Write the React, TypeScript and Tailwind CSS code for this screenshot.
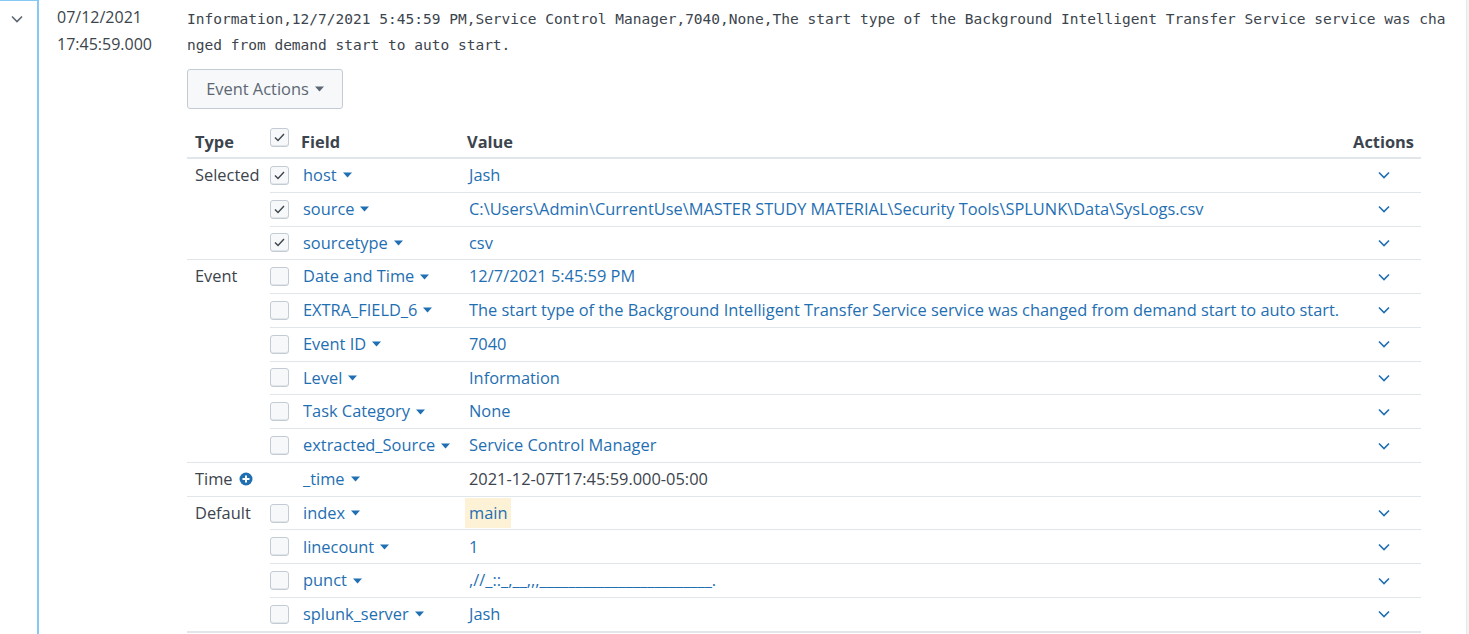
import React from "react";

const TXT = "text-[#3c444d]";
const LINK = "text-[#1f6fb2]";

function Caret() {
  return (
    <svg width="9" height="6" viewBox="0 0 9 6" className="ml-[6px] inline-block">
      <polygon points="0,0.5 9,0.5 4.5,5.5" fill="currentColor" />
    </svg>
  );
}

function Chevron({ className = "" }: { className?: string }) {
  return (
    <svg width="12" height="8" viewBox="0 0 12 8" className={className}>
      <polyline points="1,1.5 6,6.5 11,1.5" fill="none" stroke="currentColor" strokeWidth="1.6" />
    </svg>
  );
}

function Checkbox({ checked }: { checked?: boolean }) {
  return (
    <div className="w-[19px] h-[19px] rounded-[3px] border border-[#c3cbd4] bg-[#f7f8fa] flex items-center justify-center shadow-[inset_0_-1px_0_#e1e6eb]">
      {checked && (
        <svg width="11" height="9" viewBox="0 0 11 9">
          <polyline points="1,4.5 4,7.5 10,1" fill="none" stroke="#3c444d" strokeWidth="1.4" />
        </svg>
      )}
    </div>
  );
}

function PlusCircle() {
  return (
    <svg width="14" height="14" viewBox="0 0 14 14" className="ml-[6px]">
      <circle cx="7" cy="7" r="6.5" fill="#1f6fb2" />
      <rect x="3.5" y="6" width="7" height="2" fill="#fff" />
      <rect x="6" y="3.5" width="2" height="7" fill="#fff" />
    </svg>
  );
}

type Row = {
  field: string;
  value: string;
  checked?: boolean;
  noBox?: boolean;
  plainValue?: boolean;
  highlight?: boolean;
  noAction?: boolean;
};

type Group = { type: string; plus?: boolean; rows: Row[] };

const groups: Group[] = [
  {
    type: "Selected",
    rows: [
      { field: "host", value: "Jash", checked: true },
      {
        field: "source",
        value: "C:\\Users\\Admin\\CurrentUse\\MASTER STUDY MATERIAL\\Security Tools\\SPLUNK\\Data\\SysLogs.csv",
        checked: true,
      },
      { field: "sourcetype", value: "csv", checked: true },
    ],
  },
  {
    type: "Event",
    rows: [
      { field: "Date and Time", value: "12/7/2021 5:45:59 PM" },
      {
        field: "EXTRA_FIELD_6",
        value:
          "The start type of the Background Intelligent Transfer Service service was changed from demand start to auto start.",
      },
      { field: "Event ID", value: "7040" },
      { field: "Level", value: "Information" },
      { field: "Task Category", value: "None" },
      { field: "extracted_Source", value: "Service Control Manager" },
    ],
  },
  {
    type: "Time",
    plus: true,
    rows: [
      {
        field: "_time",
        value: "2021-12-07T17:45:59.000-05:00",
        noBox: true,
        plainValue: true,
        noAction: true,
      },
    ],
  },
  {
    type: "Default",
    rows: [
      { field: "index", value: "main", highlight: true },
      { field: "linecount", value: "1" },
      { field: "punct", value: ",//_::_,__,,,________________________." },
      { field: "splunk_server", value: "Jash" },
    ],
  },
];

export default function App() {
  const font = { fontFamily: '"Open Sans", "Liberation Sans", sans-serif' };
  return (
    <div className="w-[1469px] h-[634px] overflow-hidden bg-white flex" style={font}>
      <div className="w-[39px] shrink-0 border-t border-r-2 border-[#86c9f6] flex justify-center pt-[14px] text-[#5c6773]">
        <div className="ml-[-4px]">
          <Chevron />
        </div>
      </div>
      <div className="w-[148px] shrink-0 pl-[18px] pt-[4px] text-[16px] leading-[27px] text-[#3c444d]">
        <div>07/12/2021</div>
        <div>17:45:59.000</div>
      </div>
      <div className="flex-1 flex flex-col">
        <div
          className="w-[1264px] pt-[6px] text-[14.53px] leading-[26px] text-[#3c444d] break-all"
          style={{ fontFamily: '"DejaVu Sans Mono", "Liberation Mono", monospace' }}
        >
          Information,12/7/2021 5:45:59 PM,Service Control Manager,7040,None,The start type of the Background Intelligent Transfer Service service was changed from demand start to auto start.
        </div>
        <div className="mt-[11px]">
          <button className="h-[40px] w-[156px] rounded-[3px] border border-[#c3cbd4] bg-[#f7f8fa] text-[16.4px] text-[#5c6773] flex items-center justify-center">
            Event Actions
            <Caret />
          </button>
        </div>
        <div className="mt-[15px] w-[1234px] text-[16.4px]">
          <div className={`flex h-[35px] border-b-2 border-[#e1e6eb] font-bold ${TXT}`}>
            <div className="w-[83px] pl-2 pt-[6px]">Type</div>
            <div className="w-[31px] pt-[4px]">
              <Checkbox checked />
            </div>
            <div className="w-[166px] pt-[6px]">Field</div>
            <div className="flex-1 pt-[6px]">Value</div>
            <div className="w-[80px] pt-[6px] text-right pr-[7px]">Actions</div>
          </div>
          {groups.map((g, gi) => (
            <div key={g.type} className={`flex ${gi > 0 ? "border-t border-[#e1e6eb]" : ""}`}>
              <div className={`w-[83px] shrink-0 pl-2 h-[32.77px] flex items-center ${TXT}`}>
                {g.type}
                {g.plus && <PlusCircle />}
              </div>
              <div className="flex-1 flex flex-col">
                {g.rows.map((r, ri) => (
                  <div
                    key={r.field}
                    className={`flex items-center ${ri > 0 ? "h-[33.77px] border-t border-[#e1e6eb]" : "h-[32.77px]"}`}
                  >
                    <div className="w-[33px] shrink-0">{!r.noBox && <Checkbox checked={r.checked} />}</div>
                    <div className={`w-[166px] shrink-0 flex items-center ${LINK}`}>
                      {r.field}
                      <Caret />
                    </div>
                    <div className="flex-1 flex items-center">
                      {r.highlight ? (
                        <span className={`bg-[#fdf2d6] px-[4px] ml-[-4px] py-[3px] ${LINK}`}>{r.value}</span>
                      ) : (
                        <span className={r.plainValue ? TXT : LINK}>{r.value}</span>
                      )}
                    </div>
                    <div className="w-[74px] shrink-0 flex justify-center text-[#1f6fb2]">
                      {!r.noAction && <Chevron />}
                    </div>
                  </div>
                ))}
              </div>
            </div>
          ))}
          <div className="border-t-2 border-[#e1e6eb]" />
        </div>
      </div>
      <div className="w-[3px] shrink-0 bg-[#f3f3f3] border-l border-[#e9e9e9]" />
    </div>
  );
}
